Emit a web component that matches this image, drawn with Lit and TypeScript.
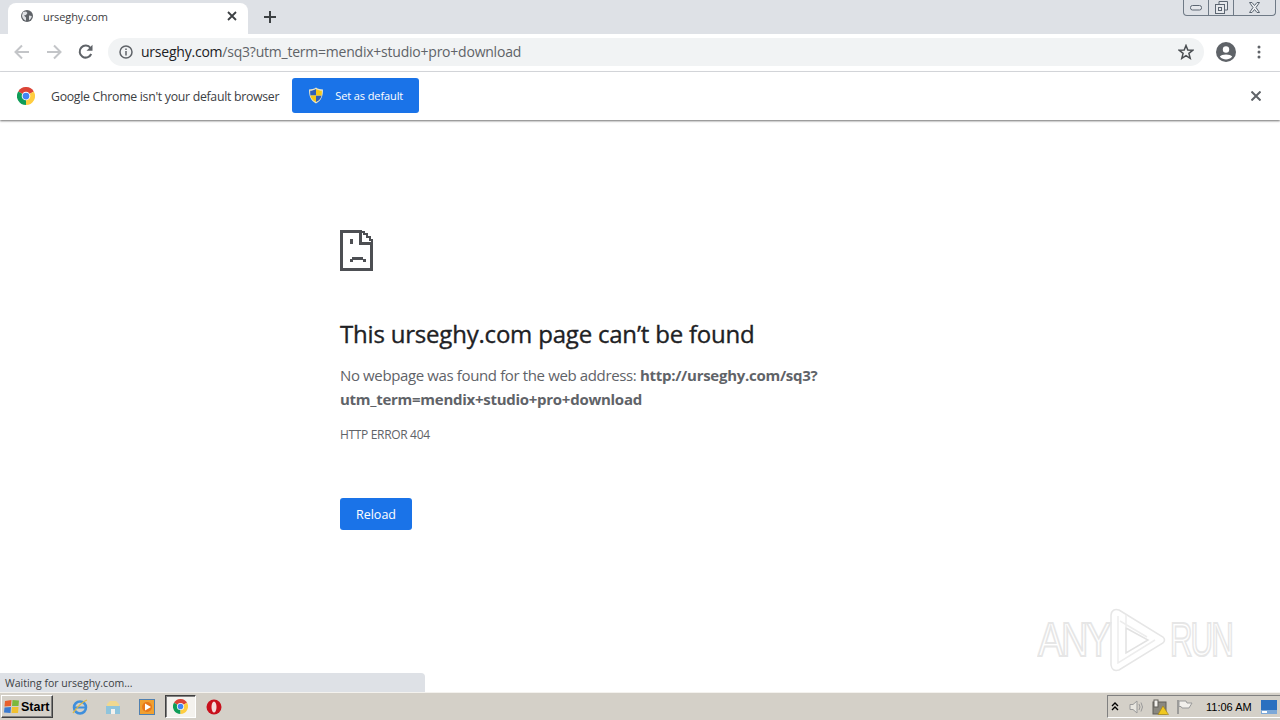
import { LitElement, html, css } from "lit";
import { customElement } from "lit/decorators.js";

const chromeIcon = (size: number) => html`<svg width=${size} height=${size} viewBox="0 0 48 48">
  <path d="M24 24 L44.8 12 A24 24 0 0 0 3.2 12 Z" fill="#db4437"/>
  <path d="M24 24 L3.2 12 A24 24 0 0 0 24 48 Z" fill="#0f9d58"/>
  <path d="M24 24 L24 48 A24 24 0 0 0 44.8 12 Z" fill="#ffcd40"/>
  <circle cx="24" cy="24" r="11.5" fill="#fff"/>
  <circle cx="24" cy="24" r="9" fill="#4285f4"/>
</svg>`;

const shield = html`<svg width="16" height="17" viewBox="0 0 16 17">
  <path d="M8 .6 C10 2 12.5 2.5 15 2.5 C15 9 13.5 13.5 8 16.4 C2.5 13.5 1 9 1 2.5 C3.5 2.5 6 2 8 .6Z" fill="#e8e4c8"/>
  <path d="M8 2 V8.5 H2.4 C2.2 7 2.1 5.5 2.2 3.8 C4 3.7 6 3.2 8 2Z" fill="#2f5fb8"/>
  <path d="M8 8.5 H13.6 C13 11.5 11.4 13.6 8 15Z" fill="#2f5fb8"/>
  <path d="M8 2 C10 3.2 12 3.7 13.8 3.8 C13.9 5.5 13.8 7 13.6 8.5 H8Z" fill="#f5c818"/>
  <path d="M8 8.5 V15 C4.6 13.6 3 11.5 2.4 8.5Z" fill="#f5c818"/>
</svg>`;

@customElement("app-root")
export class AppRoot extends LitElement {
  static styles = css`
    :host {
      display: block;
      width: 1280px;
      height: 720px;
      overflow: hidden;
      background: #fff;
      font-family: "Open Sans", "Noto Sans", sans-serif;
      color: #5f6368;
    }
    svg { display: block; flex: none; }
    .window {
      position: relative;
      display: flex;
      flex-direction: column;
      height: 720px;
    }
    .tabstrip {
      display: flex;
      align-items: flex-end;
      height: 34px;
      flex: none;
      background: #dee1e6;
      padding-left: 8px;
      position: relative;
    }
    .tab {
      display: flex;
      align-items: center;
      width: 240px;
      height: 31px;
      box-sizing: border-box;
      padding: 0 11px 5px 13px;
      background: #fff;
      border-radius: 8px 8px 0 0;
      font-size: 11px;
      color: #3c4043;
    }
    .tab-title { margin-left: 10px; flex: 1; letter-spacing: -0.1px; }
    .plus { margin: 0 0 3px 16px; align-self: center; padding-top: 3px; }
    .wincontrols {
      display: flex;
      align-self: flex-start;
      margin-left: auto;
      margin-right: 4px;
      height: 16px;
      box-sizing: border-box;
      border: 1px solid #6f7a86;
      border-top: none;
      border-radius: 0 0 4px 4px;
    }
    .wc { display: flex; align-items: center; justify-content: center; height: 15px; }
    .wc + .wc { border-left: 1px solid #6f7a86; }
    .wc-min { width: 24px; }
    .wc-max { width: 24px; }
    .wc-close { width: 41px; }

    .toolbar {
      display: flex;
      align-items: center;
      height: 38px;
      flex: none;
      box-sizing: border-box;
      border-bottom: 1px solid #dadce0;
      padding: 0 19px 2px 13px;
      background: #fff;
    }
    .navs { display: flex; gap: 14px; margin-right: 13px; }
    .omnibox {
      display: flex;
      align-items: center;
      flex: 1;
      height: 28px;
      background: #f1f3f4;
      border-radius: 14px;
      padding: 0 10px 0 11px;
      min-width: 0;
    }
    .url {
      margin-left: 8px;
      flex: 1;
      font-size: 14px;
      letter-spacing: -0.225px;
      color: #5f6368;
      white-space: nowrap;
    }
    .url b { font-weight: 400; color: #202124; }
    .tb-right { display: flex; align-items: center; margin-left: 12px; gap: 21px; }

    .infobar {
      display: flex;
      align-items: center;
      height: 48px;
      flex: none;
      box-sizing: border-box;
      padding: 0 19px 0 17px;
      background: #fff;
      box-shadow: 0 1px 2px #707070;
      position: relative;
      z-index: 1;
    }
    .info-text {
      margin-left: 16px;
      font-size: 12.3px;
      letter-spacing: -0.29px;
      color: #3c4043;
      white-space: nowrap;
    }
    .set-default {
      display: flex;
      align-items: center;
      width: 127px;
      height: 35px;
      box-sizing: border-box;
      margin: 0 0 1px 13px;
      padding: 0 0 1px 16px;
      background: #1a73e8;
      color: #fff;
      border-radius: 3px;
      font-size: 11px;
      letter-spacing: -0.1px;
    }
    .set-default span { margin-left: 11px; }
    .info-close { margin-left: auto; }

    .page {
      flex: 1;
      min-height: 0;
      box-sizing: border-box;
      padding: 110px 0 0 340px;
      background: #fff;
    }
    .sad { display: block; }
    h1 {
      margin: 45px 0 0;
      font-size: 24px;
      line-height: 36px;
      font-weight: 400;
      -webkit-text-stroke: 0.35px #202124;
      color: #202124;
      letter-spacing: -0.2px;
      white-space: nowrap;
    }
    .desc {
      margin: 11px 0 0;
      width: 500px;
      font-size: 15px;
      line-height: 24px;
      letter-spacing: -0.37px;
      color: #5f6368;
    }
    .desc strong { font-weight: 700; color: #5f6368; letter-spacing: -0.27px; }
    .code {
      margin-top: 15px;
      font-size: 12px;
      line-height: 18px;
      letter-spacing: -0.33px;
      color: #5f6368;
    }
    .reload {
      display: flex;
      align-items: center;
      justify-content: center;
      margin-top: 54px;
      width: 72px;
      height: 32px;
      border-radius: 3px;
      background: #1a73e8;
      color: #fff;
      font-size: 12.5px;
    }

    .status {
      position: absolute;
      left: 0;
      bottom: 28px;
      width: 425px;
      height: 19px;
      box-sizing: border-box;
      padding: 1px 0 0 5px;
      background: #dee1e6;
      border-radius: 0 4px 0 0;
      font-size: 10.5px;
      line-height: 18px;
      color: #3c4043;
    }
    .watermark {
      position: absolute;
      left: 1038px;
      top: 607px;
      display: flex;
      align-items: center;
      gap: 3px;
      font-family: "Liberation Sans", sans-serif;
      font-size: 48px;
      line-height: 66px;
      color: #fff;
      -webkit-text-stroke: 2px #e6e6e6;
    }
    .wm-text { display: block; width: 66px; letter-spacing: -3px; white-space: nowrap; transform-origin: 0 50%; }
    .wm-any { transform: scaleX(0.79); }
    .wm-run { transform: scaleX(0.65); }

    .taskbar {
      display: flex;
      align-items: center;
      height: 28px;
      flex: none;
      box-sizing: border-box;
      background: #d4d0c8;
      border-top: 1px solid #f4f2ee;
      position: relative;
      z-index: 2;
    }
    .start {
      display: flex;
      align-items: center;
      gap: 1px;
      width: 52px;
      height: 23px;
      margin-left: 1px;
      box-sizing: border-box;
      padding-left: 2px;
      background: #d4d0c8;
      border: 1px solid;
      border-color: #fff #404040 #404040 #fff;
      box-shadow: inset -1px -1px 0 #808080;
      font-family: "Liberation Sans", sans-serif;
      font-weight: 700;
      font-size: 12.5px;
      color: #000;
    }
    .quick { display: flex; align-items: center; margin-left: 18px; }
    .ql { display: flex; justify-content: center; width: 18px; }
    .ql2 { margin-left: 15px; }
    .ql3 { margin-left: 16px; }
    .active-app {
      display: flex;
      align-items: center;
      justify-content: center;
      width: 31px;
      height: 23px;
      margin-left: 9px;
      box-sizing: border-box;
      background: #f4f2ee;
      border: 1px solid;
      border-color: #404040 #fff #fff #404040;
      box-shadow: inset 1px 1px 0 #808080;
    }
    .ql4 { margin-left: 9px; }
    .tray {
      display: flex;
      align-items: center;
      margin-left: auto;
      height: 23px;
      width: 173px;
      box-sizing: border-box;
      border-left: 1px solid #808080;
      border-top: 1px solid #808080;
      border-bottom: 1px solid #fff;
      padding-left: 3px;
      gap: 7px;
    }
    .speaker { margin-left: 3px; }
    .clock {
      margin-left: 6px;
      width: 47px;
      font-family: "Liberation Sans", sans-serif;
      font-size: 11px;
      color: #000;
      white-space: nowrap;
    }
    .desk { margin-left: 1px; }
  `;

  render() {
    const grey = "#5f6368";
    const ink = "#4d4f53";
    return html`
      <div class="window">
        <div class="tabstrip">
          <div class="tab">
            <svg width="12" height="12" viewBox="0 0 12 12"><circle cx="6" cy="6" r="6" fill="${grey}"/><path d="M2 2 L5 1.5 L6.5 3 L5 5 L3 5.5 L5 7.5 L5 10.8 C3 10 1 8 1 5.5Z M8 5.5 L10.8 6 C10.5 8 9.5 9.5 8 10.3 L8 8Z" fill="#dfe1e5"/></svg>
            <span class="tab-title">urseghy.com</span>
            <svg width="10" height="10" viewBox="0 0 10 10"><path d="M1 1 L9 9 M9 1 L1 9" stroke="#3c4043" stroke-width="1.8"/></svg>
          </div>
          <svg class="plus" width="12" height="12" viewBox="0 0 12 12"><path d="M6 0 V12 M0 6 H12" stroke="#3c4043" stroke-width="2"/></svg>
          <div class="wincontrols">
            <div class="wc wc-min"><svg width="12" height="6" viewBox="0 0 12 6"><rect x=".5" y=".5" width="11" height="4.5" rx="2" fill="#e6e8ec" stroke="#5c6672"/></svg></div>
            <div class="wc wc-max"><svg width="13" height="13" viewBox="0 0 13 13"><path d="M4 3 V.5 H12.5 V9 H10" fill="#e6e8ec" stroke="#5c6672"/><rect x=".5" y="3.5" width="9" height="9" fill="#e6e8ec" stroke="#5c6672"/><rect x="3.5" y="6.5" width="3" height="3" fill="none" stroke="#5c6672"/></svg></div>
            <div class="wc wc-close"><svg width="13" height="11" viewBox="0 0 13 11"><path d="M1.5 .5 H4 L6.5 3.5 L9 .5 H11.5 L8 5.5 L11.5 10.5 H9 L6.5 7.5 L4 10.5 H1.5 L5 5.5Z" fill="#eceef1" stroke="#5c6672"/></svg></div>
          </div>
        </div>

        <div class="toolbar">
          <div class="navs">
            <svg width="18" height="18" viewBox="0 0 18 18"><path d="M16 9 H3 M9 2.5 L2.5 9 L9 15.5" fill="none" stroke="#c3c5c8" stroke-width="2"/></svg>
            <svg width="18" height="18" viewBox="0 0 18 18"><path d="M2 9 H15 M9 2.5 L15.5 9 L9 15.5" fill="none" stroke="#c3c5c8" stroke-width="2"/></svg>
            <svg width="18" height="18" viewBox="0 0 18 18"><path d="M14.2 11 A6 6 0 1 1 13.5 5" fill="none" stroke="${grey}" stroke-width="2"/><path d="M15.5 1.8 V7.8 H9.5Z" fill="${grey}"/></svg>
          </div>
          <div class="omnibox">
            <svg width="14" height="14" viewBox="0 0 14 14"><circle cx="7" cy="7" r="6" fill="none" stroke="${grey}" stroke-width="1.5"/><path d="M7 6 V10.5 M7 3.5 V5" stroke="${grey}" stroke-width="1.5"/></svg>
            <span class="url"><b>urseghy.com</b>/sq3?utm_term=mendix+studio+pro+download</span>
            <svg width="16" height="16" viewBox="0 0 16 16"><path d="M8 1.5 L9.8 6 L14.8 6.3 L10.9 9.4 L12.2 14.3 L8 11.6 L3.8 14.3 L5.1 9.4 L1.2 6.3 L6.2 6Z" fill="none" stroke="#4a4e52" stroke-width="1.5"/></svg>
          </div>
          <div class="tb-right">
            <svg width="20" height="20" viewBox="0 0 20 20"><circle cx="10" cy="10" r="10" fill="${grey}"/><circle cx="10" cy="7.5" r="3.2" fill="#fff"/><path d="M3.8 14.5 C5.5 11.8 14.5 11.8 16.2 14.5 C14.5 16.8 12 17.5 10 17.5 C8 17.5 5.5 16.8 3.8 14.5Z" fill="#fff"/></svg>
            <svg width="4" height="14" viewBox="0 0 4 14"><circle cx="2" cy="2" r="1.5" fill="${grey}"/><circle cx="2" cy="7" r="1.5" fill="${grey}"/><circle cx="2" cy="12" r="1.5" fill="${grey}"/></svg>
          </div>
        </div>

        <div class="infobar">
          ${chromeIcon(18)}
          <span class="info-text">Google Chrome isn't your default browser</span>
          <div class="set-default">${shield}<span>Set as default</span></div>
          <svg class="info-close" width="10" height="10" viewBox="0 0 10 10"><path d="M.5 .5 L9.5 9.5 M9.5 .5 L.5 9.5" stroke="${grey}" stroke-width="2"/></svg>
        </div>

        <div class="page">
          <svg class="sad" width="33" height="41" viewBox="0 0 33 41" shape-rendering="crispEdges">
            <path d="M1.5 1.5 H20 V13 H31.5 V39.5 H1.5Z" fill="none" stroke="${ink}" stroke-width="3"/>
            <path d="M20 1.5 H24 V4 H27 V7 H30 V10 H32 V13" fill="none" stroke="${ink}" stroke-width="2"/>
            <path d="M9.5 9 H12.5 V14 H9.5Z M12 27 H23 V29 H25.5 V31.5 H22.5 V29.5 H12.5 V31.5 H9.5 V29 H12Z" fill="${ink}"/>
          </svg>
          <h1>This urseghy.com page can’t be found</h1>
          <p class="desc">No webpage was found for the web address: <strong>http://urseghy.com/sq3?<br>utm_term=mendix+studio+pro+download</strong></p>
          <div class="code">HTTP ERROR 404</div>
          <div class="reload">Reload</div>
        </div>

        <div class="watermark">
          <span class="wm-text wm-any">ANY</span>
          <svg width="60" height="66" viewBox="0 0 60 66">
            <path d="M12 3 L56 30 Q59 33 56 36 L12 63 Q5 65 4 58 V8 Q5 1 12 3Z" fill="none" stroke="#e6e6e6" stroke-width="1.5"/>
            <path d="M19 21 L41 33 L19 46Z" fill="none" stroke="#e2e2e2" stroke-width="1.5"/>
            <path d="M11 9 V56 L48 33 M13 14 L40 30 M19 21 V8" fill="none" stroke="#ededed" stroke-width="1.5"/>
          </svg>
          <span class="wm-text wm-run">RUN</span>
        </div>

        <div class="status">Waiting for urseghy.com...</div>

        <div class="taskbar">
          <div class="start">
            <svg width="16" height="15" viewBox="0 0 16 15"><path d="M1 2 L7.5 1 L7 7 L.5 7.5Z" fill="#e8602c"/><path d="M8.5 1 L15 1.5 L14.5 7 L8 7Z" fill="#7cb83c"/><path d="M.5 8.5 L7 8 L6.5 14 L0 13.5Z" fill="#3a7ad0"/><path d="M8 8 L14.5 8 L14 14 L7.5 14Z" fill="#f0c030"/></svg>
            Start
          </div>
          <div class="quick">
            <div class="ql"><svg width="18" height="18" viewBox="0 0 18 18"><circle cx="9" cy="9.5" r="6" fill="none" stroke="#3f8fdc" stroke-width="2.5"/><path d="M4 9.5 H15" stroke="#3f8fdc" stroke-width="2"/><path d="M2 15 C5 11 10 4 16 2" fill="none" stroke="#e0b840" stroke-width="1.3"/></svg></div>
            <div class="ql ql2"><svg width="16" height="16" viewBox="0 0 16 16"><path d="M2 5 L5 2 H11 L14 5 V14 H2Z" fill="#f0d890"/><path d="M1 7 H15 V15 H1Z" fill="#8fc4dc"/><rect x="6" y="10" width="4" height="5" fill="#f4f2ee"/></svg></div>
            <div class="ql ql3"><svg width="16" height="16" viewBox="0 0 16 16"><rect x=".5" y=".5" width="15" height="15" fill="#f0a030" stroke="#5080b0"/><circle cx="8" cy="8" r="5" fill="#e87818"/><path d="M6 4.5 L12 8 L6 11.5Z" fill="#fff"/></svg></div>
            <div class="active-app">${chromeIcon(15)}</div>
            <div class="ql ql4"><svg width="16" height="16" viewBox="0 0 16 16"><circle cx="8" cy="8" r="7.5" fill="#c8101c"/><ellipse cx="8" cy="8" rx="2.5" ry="5.5" fill="#f4dcdc"/></svg></div>
          </div>
          <div class="tray">
            <svg width="8" height="9" viewBox="0 0 8 9"><path d="M1 4 L4 1 L7 4 M1 8 L4 5 L7 8" fill="none" stroke="#000" stroke-width="1.4"/></svg>
            <svg class="speaker" width="16" height="16" viewBox="0 0 16 16"><path d="M1 5.5 H4 L8 2 V14 L4 10.5 H1Z" fill="#e8e6e0" stroke="#9a9a9a"/><path d="M10 5 Q12 8 10 11 M12 3.5 Q15 8 12 12.5" fill="none" stroke="#9a9a9a"/></svg>
            <svg width="17" height="16" viewBox="0 0 17 16"><rect x="1" y="3" width="13" height="12" fill="#8a8880" stroke="#605e58"/><rect x="2" y="1" width="4" height="7" fill="#f4f2ee" stroke="#605e58"/><path d="M11 7 L16.5 15.5 H6Z" fill="#f0c820" stroke="#a08010" stroke-width=".6"/></svg>
            <svg width="17" height="16" viewBox="0 0 17 16"><path d="M2 1 V15" stroke="#8a8a8a" stroke-width="1.5"/><path d="M3 2 H10 L11 4 H16 L13 9 H6 L5 7.5 H3Z" fill="#f2f0ec" stroke="#9a9a9a"/></svg>
            <span class="clock">11:06 AM</span>
            <svg class="desk" width="16" height="14" viewBox="0 0 16 14"><rect width="16" height="14" fill="#2a70c0"/><rect y="10" width="16" height="4" fill="#7ca8d8"/><rect x="1" y="11" width="5" height="2" fill="#fff"/></svg>
          </div>
        </div>
      </div>
    `;
  }
}
